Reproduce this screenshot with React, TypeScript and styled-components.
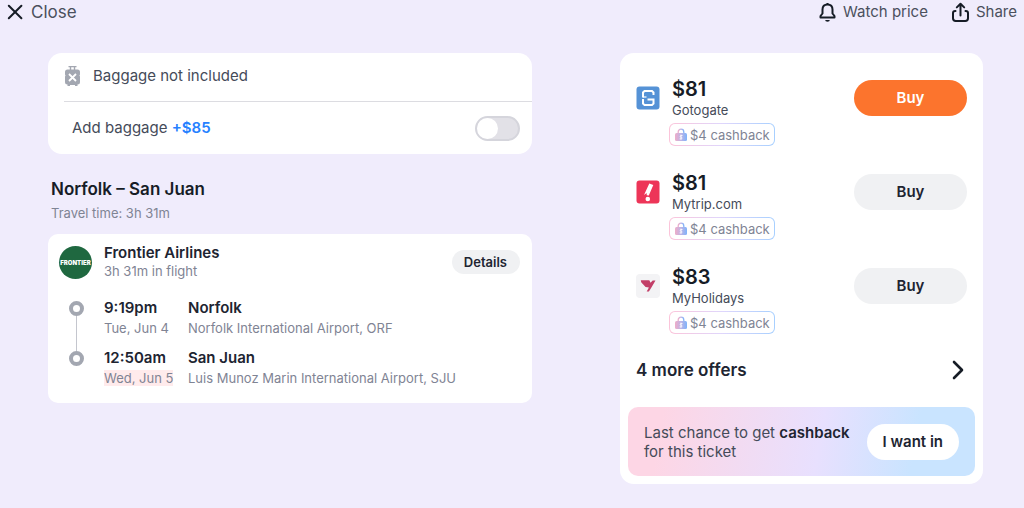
import React from "react";
import styled, { createGlobalStyle, css } from "styled-components";

const GlobalStyle = createGlobalStyle`
  *, *::before, *::after { box-sizing: border-box; }
  body {
    margin: 0;
    background: #f0ecfc;
    color: #202431;
    font-family: Inter, "Liberation Sans", sans-serif;
    font-size: 15px;
    line-height: 20px;
  }
  button { font: inherit; color: inherit; border: 0; cursor: pointer; }
  h1, h2, h3, p, ul, ol { margin: 0; padding: 0; font-size: inherit; }
  ul, ol { list-style: none; }
`;

const TopBar = styled.header`
  display: flex;
  align-items: center;
  height: 24px;
  padding: 0 7px;
  gap: 24px;
`;

const TopButton = styled.button<{ $large?: boolean }>`
  display: flex;
  align-items: center;
  gap: ${(p) => (p.$large ? 8 : 6)}px;
  padding: 0;
  background: none;
  color: #4b505d;
  font-size: ${(p) => (p.$large ? 17 : 15)}px;

  &:first-child { margin-right: auto; }
  svg { color: #161c26; }
`;

const Main = styled.main`
  display: grid;
  grid-template-columns: 4fr 3fr;
  align-items: start;
  gap: 88px;
  padding: 29px 41px 23px 48px;
`;

const Card = styled.section`
  background: #fff;
  border-radius: 14px;
`;

const BaggageStatus = styled.div`
  display: flex;
  align-items: center;
  gap: 12px;
  height: 49px;
  margin-left: 16px;
  padding-bottom: 2px;
  border-bottom: 1px solid #dcdce1;
  color: #454b59;
`;

const BaggageOption = styled.div`
  display: flex;
  align-items: center;
  justify-content: space-between;
  height: 52px;
  padding: 0 12px 0 24px;
  color: #454b59;
`;

const Extra = styled.strong`
  color: #2681ff;
  font-weight: 600;
`;

const Switch = styled.input`
  appearance: none;
  display: flex;
  width: 45px;
  height: 25px;
  margin: 0;
  padding: 0;
  border: 2px solid #d5d5dc;
  border-radius: 13px;
  background: #e2e1e7;
  cursor: pointer;

  &::before {
    content: "";
    width: 21px;
    height: 21px;
    border-radius: 50%;
    background: #fff;
  }
  &:checked { background: #2681ff; justify-content: flex-end; }
`;

const RouteHeading = styled.div`
  padding: 23px 3px 12px;
`;

const RouteTitle = styled.h1`
  font-size: 17px;
  font-weight: 600;
  line-height: 24px;
  color: #161c26;
`;

const Muted = styled.p`
  font-size: 13px;
  line-height: 18px;
  color: #7f8494;
`;

const RouteTime = styled(Muted)`
  padding-top: 3px;
`;

const Itinerary = styled(Card)`
  padding: 10px 12px 16px 11px;
  border-radius: 10px;
`;

const Airline = styled.div`
  display: flex;
  align-items: center;
  gap: 12px;
`;

const AirlineLogo = styled.div`
  display: grid;
  place-items: center;
  width: 33px;
  height: 33px;
  border-radius: 50%;
  overflow: hidden;
  background: #1f6840;
`;

const AirlineText = styled.div`
  flex: 1;
`;

const Strong = styled.h2`
  font-size: 15px;
  font-weight: 600;
  line-height: 18px;
`;

const DetailsButton = styled.button`
  height: 24px;
  padding: 0 13px 0 12px;
  border-radius: 12px;
  background: #f0f1f3;
  font-size: 13px;
  font-weight: 600;
`;

const Stops = styled.ol`
  padding-top: 19px;
`;

const Stop = styled.li`
  display: grid;
  grid-template-columns: 35px 74px 1fr;
  column-gap: 10px;

  & + & { padding-top: 12px; }
`;

const Marker = styled.div<{ $line?: boolean }>`
  display: flex;
  flex-direction: column;
  align-items: center;
  padding-top: 2px;

  &::before {
    content: "";
    flex: none;
    width: 15px;
    height: 15px;
    border: 4px solid #a3a7b1;
    border-radius: 50%;
  }
  ${(p) =>
    p.$line &&
    css`
      &::after {
        content: "";
        flex: none;
        width: 1px;
        height: 35px;
        margin-bottom: -14px;
        background: #c4c6ce;
      }
    `}
`;

const StopLine = styled(Muted)`
  padding-top: 2px;
`;

const NextDay = styled.mark`
  background: #ffebec;
  color: inherit;
`;

const Offers = styled.ul`
  display: flex;
  flex-direction: column;
  gap: 25px;
  padding: 24px 16px 0;
`;

const Offer = styled.li`
  display: grid;
  grid-template-columns: 24px 1fr 113px;
  align-items: start;
  column-gap: 12px;
`;

const OfferLogo = styled.svg`
  width: 24px;
  height: 24px;
  margin-top: 9px;
`;

const Price = styled.h3`
  font-size: 20px;
  font-weight: 600;
  line-height: 24px;
  color: #161c26;
`;

const Agency = styled.p`
  font-size: 13px;
  line-height: 18px;
  color: #454b59;
`;

const Cashback = styled.div`
  display: flex;
  align-items: center;
  gap: 3px;
  width: fit-content;
  height: 23px;
  margin: 4px 0 0 -3px;
  padding: 0 4px 0 5px;
  border: 1px solid transparent;
  border-radius: 6px;
  background:
    linear-gradient(#fff, #fff) padding-box,
    linear-gradient(90deg, #fcc4da, #dfd6fc 50%, #a8d0ff) border-box;
  font-size: 13px;
  color: #7f8494;
`;

const BuyButton = styled.button<{ $primary?: boolean }>`
  height: 36px;
  margin-top: 3px;
  border-radius: 18px;
  background: ${(p) => (p.$primary ? "#fc742d" : "#f0f1f3")};
  color: ${(p) => (p.$primary ? "#fff" : "#202431")};
  font-weight: 600;
`;

const MoreButton = styled.button`
  display: flex;
  align-items: center;
  justify-content: space-between;
  width: 100%;
  height: 73px;
  padding: 0 19px 2px 16px;
  background: none;
  font-size: 17px;
  font-weight: 600;
`;

const Banner = styled.div`
  display: flex;
  align-items: center;
  justify-content: space-between;
  min-height: 69px;
  padding: 0 16px;
  border-radius: 10px;
  background: linear-gradient(100deg, #fdd6e5 10%, #e8e0fe 55%, #c9e4ff 82%);
`;

const BannerText = styled.p`
  line-height: 19px;
  color: #454b59;

  strong { font-weight: 600; color: #202431; }
`;

const BannerButton = styled.button`
  flex: none;
  height: 36px;
  padding: 0 16px;
  border-radius: 18px;
  background: #fff;
  font-weight: 600;
`;

const OffersCard = styled(Card)`
  padding-bottom: 8px;
`;

const BannerSlot = styled.div`
  padding: 0 8px;
`;

const CloseIcon = () => (
  <svg width="16" height="16" viewBox="0 0 16 16" fill="none" stroke="currentColor" strokeWidth="2" strokeLinecap="round">
    <path d="M1.800 1.800 14.400 14.200M14.400 1.800 1.800 14.200" />
  </svg>
);

const BellIcon = () => (
  <svg width="18" height="20" viewBox="0 0 18 20" fill="none" stroke="currentColor" strokeWidth="2" strokeLinejoin="round">
    <path d="M8.500 2.500C5.500 2.500 3.500 4.500 3.500 7.500V11.500L1.500 14V15.500H15.500V14L13.500 11.500V7.500C13.500 4.500 11.500 2.500 8.500 2.500Z" />
    <path d="M6.200 18h4.600A2.300 1.700 0 0 1 6.200 18Z" fill="currentColor" stroke="none" />
    <path d="M8.500 1v1.500" />
  </svg>
);

const ShareIcon = () => (
  <svg width="18" height="20" viewBox="0 0 18 20" fill="none" stroke="currentColor" strokeWidth="2" strokeLinecap="round" strokeLinejoin="round">
    <path d="M3.500 9H3.200Q1 9 1 11v5.300Q1 19 3.700 19h9.600Q16 19 16 16.300V11Q16 9 13.800 9H13.500" />
    <path d="M8.500 13.600V2M4.800 5.400 8.500 1.700l3.700 3.700" />
  </svg>
);

const SuitcaseIcon = () => (
  <svg width="17" height="22" viewBox="0 0 17 22">
    <path d="M4.500 1.600h8M6.500 2v3M10.500 2v3" stroke="#a3a7b1" strokeWidth="1.400" />
    <path d="M3.500 4.500h10a2.500 2.500 0 0 1 2.500 2.500v2.500l-.5 1 .5 1v5.500a2.500 2.500 0 0 1-2.500 2.500V21h-2.500v-1h-5v1H3.500v-1.500A2.500 2.500 0 0 1 1 17v-5.500l.5-1-.5-1V7a2.500 2.500 0 0 1 2.500-2.500Z" fill="#a3a7b1" />
    <path d="m5 9 7 7m0-7-7 7" stroke="#fff" strokeWidth="1.800" />
  </svg>
);

const ChevronIcon = () => (
  <svg width="12" height="20" viewBox="0 0 12 20" fill="none" stroke="#161c26" strokeWidth="2.600" strokeLinecap="round" strokeLinejoin="round">
    <path d="m2 2 8 8-8 8" />
  </svg>
);

const LockIcon = () => (
  <svg width="12" height="14" viewBox="0 0 12 14">
    <defs>
      <linearGradient id="lock" x1="0" x2="1" y1="0" y2="0">
        <stop offset="0" stopColor="#efadc9" />
        <stop offset=".5" stopColor="#bdb4e6" />
        <stop offset="1" stopColor="#7fb3fa" />
      </linearGradient>
    </defs>
    <path d="M3.200 6V4a2.800 2.800 0 0 1 5.600 0v2" fill="none" stroke="url(#lock)" strokeWidth="1.300" />
    <rect x="0" y="5" width="12" height="8" rx="1.500" fill="url(#lock)" />
    <path d="M7.500 7.500H5.800a.9.9 0 0 0 0 1.700h.6a.9.9 0 0 1 0 1.700H4.600M6 6.600v5" fill="none" stroke="#fff" strokeWidth=".8" />
  </svg>
);

const FrontierLogo = () => (
  <svg width="33" height="33" viewBox="0 0 33 33" role="img" aria-label="Frontier">
    <text x="16.500" y="18.500" textAnchor="middle" fill="#fff" fontFamily="Inter, sans-serif" fontSize="6" fontWeight="900">
      FRONTIER
    </text>
  </svg>
);

const GotogateLogo = () => (
  <OfferLogo viewBox="0 0 24 24">
    <rect x=".5" y=".5" width="23" height="23" rx="3" fill="#5592d6" />
    <path d="M17.500 9V6.500L16 5H8.500L7 6.500V11.500M7 13v4.500L8.500 19H16l1.500-1.500V13.500H11.500" fill="none" stroke="#fff" strokeWidth="2" />
    <path d="M7 11h3.500" stroke="#fff" strokeWidth="1.200" />
  </OfferLogo>
);

const MytripLogo = () => (
  <OfferLogo viewBox="0 0 24 24">
    <rect x=".5" y=".5" width="23" height="23" rx="3" fill="#ed3558" />
    <path d="m13.300 3.500 4 1.500-4.500 10.500-2-.2-.2-2.300-2.600 2Z" fill="#fff" />
    <circle cx="11.800" cy="19" r="2.300" fill="#fff" />
  </OfferLogo>
);

const MyHolidaysLogo = () => (
  <OfferLogo viewBox="0 0 24 24">
    <rect x="0" y="0" width="24" height="24" rx="4" fill="#f3f3f5" />
    <path d="M4.800 6.200h8.500l1.200 2.600 2.200-2.300h2.800l-3.800 6.400-2.800 4.500h-2.200l2.200-4-3.300-.5-2.600-2.600-1.800-2.100Z" fill="#c23f68" />
  </OfferLogo>
);

const offers = [
  { price: "$81", agency: "Gotogate", Logo: GotogateLogo, primary: true },
  { price: "$81", agency: "Mytrip.com", Logo: MytripLogo },
  { price: "$83", agency: "MyHolidays", Logo: MyHolidaysLogo },
];

const stops = [
  { time: "9:19pm", date: "Tue, Jun 4", city: "Norfolk", airport: "Norfolk International Airport, ORF" },
  { time: "12:50am", date: "Wed, Jun 5", city: "San Juan", airport: "Luis Munoz Marin International Airport, SJU", nextDay: true },
];

export default function App() {
  return (
    <>
      <GlobalStyle />
      <TopBar>
        <TopButton $large><CloseIcon />Close</TopButton>
        <TopButton><BellIcon />Watch price</TopButton>
        <TopButton><ShareIcon />Share</TopButton>
      </TopBar>
      <Main>
        <div>
          <Card>
            <BaggageStatus><SuitcaseIcon />Baggage not included</BaggageStatus>
            <BaggageOption>
              <label htmlFor="baggage">Add baggage <Extra>+$85</Extra></label>
              <Switch id="baggage" type="checkbox" role="switch" />
            </BaggageOption>
          </Card>
          <RouteHeading>
            <RouteTitle>Norfolk – San Juan</RouteTitle>
            <RouteTime>Travel time: 3h 31m</RouteTime>
          </RouteHeading>
          <Itinerary>
            <Airline>
              <AirlineLogo><FrontierLogo /></AirlineLogo>
              <AirlineText>
                <Strong>Frontier Airlines</Strong>
                <Muted>3h 31m in flight</Muted>
              </AirlineText>
              <DetailsButton>Details</DetailsButton>
            </Airline>
            <Stops>
              {stops.map((s, i) => (
                <Stop key={s.city}>
                  <Marker $line={i < stops.length - 1} />
                  <div>
                    <Strong as="p">{s.time}</Strong>
                    <StopLine>{s.nextDay ? <NextDay>{s.date}</NextDay> : s.date}</StopLine>
                  </div>
                  <div>
                    <Strong as="h3">{s.city}</Strong>
                    <StopLine>{s.airport}</StopLine>
                  </div>
                </Stop>
              ))}
            </Stops>
          </Itinerary>
        </div>
        <OffersCard>
          <Offers>
            {offers.map(({ price, agency, Logo, primary }) => (
              <Offer key={agency}>
                <Logo />
                <div>
                  <Price>{price}</Price>
                  <Agency>{agency}</Agency>
                  <Cashback><LockIcon />$4 cashback</Cashback>
                </div>
                <BuyButton $primary={primary}>Buy</BuyButton>
              </Offer>
            ))}
          </Offers>
          <MoreButton>4 more offers<ChevronIcon /></MoreButton>
          <BannerSlot>
            <Banner>
              <BannerText>
                Last chance to get <strong>cashback</strong>
                <br />
                for this ticket
              </BannerText>
              <BannerButton>I want in</BannerButton>
            </Banner>
          </BannerSlot>
        </OffersCard>
      </Main>
    </>
  );
}
